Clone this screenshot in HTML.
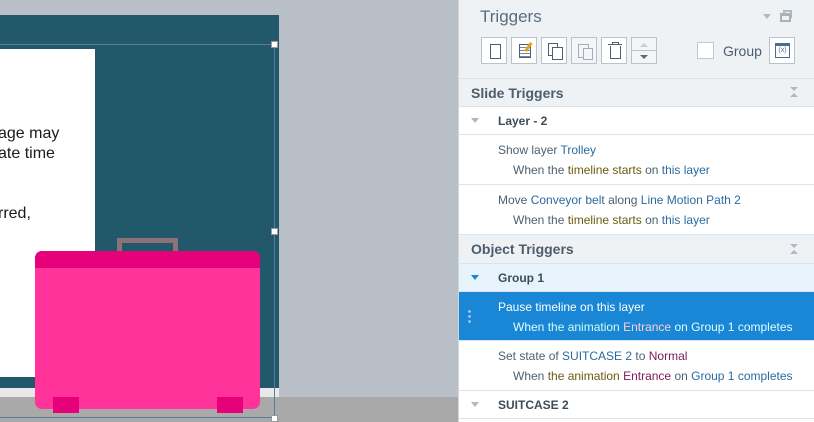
<!DOCTYPE html><html><head><style>
body{margin:0;width:814px;height:422px;overflow:hidden;position:relative;background:#b9bfc6;font-family:"Liberation Sans",sans-serif}
.a{position:absolute}
.btn{position:absolute;top:37px;width:26px;height:27px;border:1px solid #b8c4cc;background:#fff;box-sizing:border-box}
.row{position:absolute;left:459px;width:355px;box-sizing:border-box;border-bottom:1px solid #dde3e8;background:#fff}
.t1{position:absolute;left:39px;font-size:12px;color:#4d6070}
.t2{position:absolute;left:54px;font-size:12px;color:#4d6070}
.b{color:#6a5a10}.l{color:#2a6aa0}
.sec{position:absolute;left:459px;width:355px;height:28px;background:#eef2f5;border-bottom:1px solid #dde3e8;box-sizing:border-box;font-size:14px;font-weight:bold;color:#4d5d6b;padding:6px 0 0 12px}
.grp{font-size:12px;font-weight:bold;color:#3d4d5b;position:absolute;left:39px;top:7px}
.tri{position:absolute;left:12px;top:11px;width:0;height:0;border-left:4px solid transparent;border-right:4px solid transparent;border-top:5px solid #b0b8c0}
.col{position:absolute;left:789px;width:10px;height:12px}
.col:before{content:"";position:absolute;left:1px;top:1px;border-left:4px solid transparent;border-right:4px solid transparent;border-top:4px solid #b0b8c0}
.col:after{content:"";position:absolute;left:1px;top:7px;border-left:4px solid transparent;border-right:4px solid transparent;border-bottom:4px solid #b0b8c0}
</style></head><body>
<div class="a" style="left:0;top:15px;width:279px;height:383px;background:#22596a"></div>
<div class="a" style="left:0;top:49px;width:95px;height:328px;background:#fff"></div>
<div class="a" style="left:0;top:124px;font-size:16px;line-height:20px;color:#1a1a1a;white-space:nowrap;left:-2px">age may<br>ate time</div>
<div class="a" style="left:-2px;top:205px;font-size:16px;color:#1a1a1a">rred,</div>
<div class="a" style="left:0;top:388px;width:279px;height:10px;background:#e8e8e8"></div>
<div class="a" style="left:0;top:397px;width:458px;height:25px;background:#a9a9a9"></div>
<div class="a" style="left:117px;top:238px;width:61px;height:16px;border:5px solid #8e7077;box-sizing:border-box;border-bottom:none"></div>
<div class="a" style="left:35px;top:251px;width:225px;height:158px;background:#ff3399;border-radius:7px;overflow:hidden"><div style="height:17px;background:#e6007a"></div></div>
<div class="a" style="left:53px;top:397px;width:26px;height:16px;background:#e6007a"></div>
<div class="a" style="left:217px;top:397px;width:26px;height:16px;background:#e6007a"></div>
<div class="a" style="left:0;top:44px;width:274px;height:1px;background:#5a7aa0"></div>
<div class="a" style="left:0;top:417px;width:274px;height:1px;background:#5a7aa0"></div>
<div class="a" style="left:274px;top:44px;width:1px;height:374px;background:#5a7aa0"></div>
<div class="a" style="left:271px;top:41px;width:5px;height:5px;background:#fff;border:1px solid #999"></div>
<div class="a" style="left:271px;top:228px;width:5px;height:5px;background:#fff;border:1px solid #999"></div>
<div class="a" style="left:271px;top:415px;width:5px;height:5px;background:#fff;border:1px solid #999"></div>

<div class="a" style="left:458px;top:0;width:356px;height:422px;background:#fff;border-left:1px solid #d0d6dc;box-sizing:border-box"></div>
<div class="a" style="left:459px;top:0;width:355px;height:78px;background:#eef2f5;border-bottom:1px solid #dde3e8"></div>
<div class="a" style="left:480px;top:7px;font-size:17px;color:#5a6d7d">Triggers</div>
<div class="a" style="left:763px;top:14px;border-left:4px solid transparent;border-right:4px solid transparent;border-top:5px solid #b0b8c0"></div>
<div class="a" style="left:783px;top:10px;width:9px;height:8px;border:2px solid #b0b8c0;border-bottom:none;box-sizing:border-box"></div>
<div class="a" style="left:780px;top:13px;width:11px;height:9px;border:2px solid #a8b2ba;border-top-width:3px;box-sizing:border-box;background:#eef2f5"></div>
<div class="btn" style="left:481px"><div class="a" style="left:8px;top:6px;width:9px;height:13px;border:1px solid #4d6070"></div></div>
<div class="btn" style="left:511px"><div class="a" style="left:7px;top:6px;width:10px;height:12px;border:1px solid #4d6070;background:repeating-linear-gradient(#fff 0 2px,#789 2px 3px)"></div><div class="a" style="left:15px;top:4px;width:3px;height:10px;background:#e8a020;transform:rotate(35deg)"></div></div>
<div class="btn" style="left:541px"><div class="a" style="left:6px;top:5px;width:8px;height:11px;border:1px solid #4d6070"></div><div class="a" style="left:10px;top:9px;width:9px;height:11px;border:1px solid #4d6070;background:#fff"></div></div>
<div class="btn" style="left:571px;background:#f3f5f7"><div class="a" style="left:6px;top:6px;width:9px;height:12px;border:1px solid #aab"></div><div class="a" style="left:11px;top:10px;width:8px;height:10px;border:1px solid #aab;background:#f3f5f7"></div></div>
<div class="btn" style="left:601px"><div class="a" style="left:8px;top:8px;width:9px;height:12px;border:1px solid #4d6070;border-top:none"></div><div class="a" style="left:6px;top:6px;width:14px;height:1px;background:#4d6070"></div><div class="a" style="left:10px;top:4px;width:5px;height:2px;border:1px solid #4d6070;border-bottom:none"></div></div>
<div class="btn" style="left:631px;background:#f3f5f7"><div class="a" style="left:0;top:12px;width:24px;height:1px;background:#b8c4cc"></div><div class="a" style="left:8px;top:5px;border-left:4px solid transparent;border-right:4px solid transparent;border-bottom:4px solid #c8d0d6"></div><div class="a" style="left:8px;top:17px;border-left:4px solid transparent;border-right:4px solid transparent;border-top:4px solid #5a6a78"></div></div>
<div class="a" style="left:697px;top:42px;width:17px;height:17px;border:1px solid #c0c8d0;background:#fff;box-sizing:border-box"></div>
<div class="a" style="left:723px;top:43px;font-size:14px;color:#4d5d6b">Group</div>
<div class="btn" style="left:769px"><div class="a" style="left:5px;top:5px;width:15px;height:15px;border:1px solid #4d6a90;box-sizing:border-box;border-top-width:3px;font-size:7px;color:#4d6a90;text-align:center;line-height:10px">(x)</div></div>

<div class="sec" style="top:79px">Slide Triggers</div>
<div class="col" style="top:86px"></div>
<div class="row" style="top:107px;height:28px"><div class="tri"></div><div class="grp">Layer - 2</div></div>
<div class="row" style="top:135px;height:50px"><div class="t1" style="top:8px">Show layer <span class="l">Trolley</span></div><div class="t2" style="top:28px">When the <span class="b">timeline starts</span> on <span class="l">this layer</span></div></div>
<div class="row" style="top:185px;height:50px"><div class="t1" style="top:8px">Move <span class="l">Conveyor belt</span> along <span class="l">Line Motion Path 2</span></div><div class="t2" style="top:28px">When the <span class="b">timeline starts</span> on <span class="l">this layer</span></div></div>
<div class="sec" style="top:235px;height:29px">Object Triggers</div>
<div class="col" style="top:243px"></div>
<div class="row" style="top:264px;height:28px;background:#e8f4fb"><div class="tri" style="border-top-color:#1a86d6"></div><div class="grp">Group 1</div></div>
<div class="row" style="top:292px;height:49px;background:#1a86d6;color:#fff"><div class="a" style="left:9px;top:17px;width:3px;height:14px;background:radial-gradient(circle,#9cc8ee 1.3px,transparent 1.5px) 0 0/3px 5px"></div><div class="t1" style="top:8px;color:#fff">Pause timeline on this layer</div><div class="t2" style="top:28px;color:#dff">When <span style="color:#cfe">the animation</span> <span style="color:#fcd">Entrance</span> on Group 1 completes</div></div>
<div class="row" style="top:341px;height:50px"><div class="t1" style="top:8px">Set state of <span class="l">SUITCASE 2</span> to <span style="color:#7a1a5a">Normal</span></div><div class="t2" style="top:28px">When <span class="b">the animation</span> <span style="color:#7a1a5a">Entrance</span> on <span class="l">Group 1</span> <span class="l">completes</span></div></div>
<div class="row" style="top:391px;height:28px"><div class="tri"></div><div class="grp">SUITCASE 2</div></div>
</body></html>
